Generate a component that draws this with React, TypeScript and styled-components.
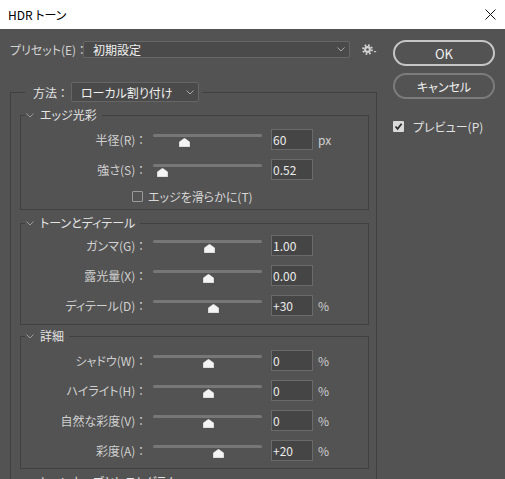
import styled, { createGlobalStyle } from "styled-components";

const GlobalStyle = createGlobalStyle`
  html, body {
    margin: 0;
    padding: 0;
    background: #535353;
    overflow: hidden;
  }
  body {
    font-family: "Noto Sans CJK JP", "Noto Sans", sans-serif;
    font-size: 12px;
    font-feature-settings: "palt";
  }
`;

type SliderRow = { label: string; value: string; unit?: string; pos: number };

const edgeRows: SliderRow[] = [
  { label: "半径(R) ：", value: "60", unit: "px", pos: 31 },
  { label: "強さ(S) ：", value: "0.52", pos: 9.5 },
];

const toneRows: SliderRow[] = [
  { label: "ガンマ(G) ：", value: "1.00", pos: 56 },
  { label: "露光量(X) ：", value: "0.00", pos: 55 },
  { label: "ディテール(D) ：", value: "+30", unit: "%", pos: 60 },
];

const detailRows: SliderRow[] = [
  { label: "シャドウ(W) ：", value: "0", unit: "%", pos: 55 },
  { label: "ハイライト(H) ：", value: "0", unit: "%", pos: 55 },
  { label: "自然な彩度(V) ：", value: "0", unit: "%", pos: 55 },
  { label: "彩度(A) ：", value: "+20", unit: "%", pos: 65 },
];

const Chevron = ({ color = "#a8a8a8" }: { color?: string }) => (
  <svg width="8" height="5" viewBox="0 0 8 5">
    <polyline points="0.5,0.5 4,4 7.5,0.5" fill="none" stroke={color} strokeWidth="1" />
  </svg>
);

const Gear = () => (
  <svg width="15" height="11" viewBox="0 0 15 11">
    <circle cx="5.5" cy="5.5" r="4.3" fill="none" stroke="#d0d0d0" strokeWidth="2.2" strokeDasharray="1.7 1.68" />
    <circle cx="5.5" cy="5.5" r="3.4" fill="#d0d0d0" />
    <circle cx="5.5" cy="5.5" r="1.3" fill="#535353" />
    <polygon points="11.5,7 14.5,7 13,8.8" fill="#d0d0d0" />
  </svg>
);

const Thumb = () => (
  <svg width="11" height="9" viewBox="0 0 11 9">
    <polygon points="5.5,0.3 10.7,4 10.7,8.7 0.3,8.7 0.3,4" fill="#f4f4f4" stroke="#f4f4f4" strokeWidth="0.6" strokeLinejoin="round" />
  </svg>
);

const Slider = ({ row }: { row: SliderRow }) => (
  <Row>
    <RowLabel>{row.label}</RowLabel>
    <SliderBox>
      <Track />
      <ThumbWrap style={{ left: row.pos - 5.5 }}>
        <Thumb />
      </ThumbWrap>
    </SliderBox>
    <NumInput readOnly value={row.value} />
    {row.unit && <Unit>{row.unit}</Unit>}
  </Row>
);

const App: React.FC = () => {
  return (
    <>
      <GlobalStyle />
      <Window>
        <TitleBar>
          <span>HDR トーン</span>
          <svg width="11" height="11" viewBox="0 0 11 11">
            <line x1="0.5" y1="0.5" x2="10.5" y2="10.5" stroke="#111" strokeWidth="1" />
            <line x1="10.5" y1="0.5" x2="0.5" y2="10.5" stroke="#111" strokeWidth="1" />
          </svg>
        </TitleBar>
        <Body>
          <LeftCol>
            <PresetRow>
              <PresetLabel>プリセット(E) ：</PresetLabel>
              <Select $w={267} $h={17}>
                <span>初期設定</span>
                <Chevron />
              </Select>
              <GearWrap>
                <Gear />
              </GearWrap>
            </PresetRow>
            <OuterSet>
              <OuterLegend>
                <MethodLabel>方法 ：</MethodLabel>
                <Select $w={128} $h={20}>
                  <span>ローカル割り付け</span>
                  <Chevron />
                </Select>
              </OuterLegend>
              <Group $mt={6} $pt={2} $pb={1}>
                <GroupLegend>
                  <Chevron color="#9a9a9a" />
                  <span>エッジ光彩</span>
                </GroupLegend>
                {edgeRows.map((r) => (
                  <Slider key={r.label} row={r} />
                ))}
                <CheckRow>
                  <EmptyBox />
                  <span>エッジを滑らかに(T)</span>
                </CheckRow>
              </Group>
              <Group $mt={6} $pt={0} $pb={4}>
                <GroupLegend>
                  <Chevron color="#9a9a9a" />
                  <span>トーンとディテール</span>
                </GroupLegend>
                {toneRows.map((r) => (
                  <Slider key={r.label} row={r} />
                ))}
              </Group>
              <Group $mt={4} $pt={2} $pb={3}>
                <GroupLegend>
                  <Chevron color="#9a9a9a" />
                  <span>詳細</span>
                </GroupLegend>
                {detailRows.map((r) => (
                  <Slider key={r.label} row={r} />
                ))}
              </Group>
              <Group $mt={6} $pt={0} $pb={40}>
                <GroupLegend>
                  <Chevron color="#9a9a9a" />
                  <span>トーンカーブとヒストグラム</span>
                </GroupLegend>
              </Group>
            </OuterSet>
          </LeftCol>
          <RightCol>
            <PillButton $primary>OK</PillButton>
            <PillButton>キャンセル</PillButton>
            <PreviewRow>
              <CheckedBox>
                <svg width="9" height="9" viewBox="0 0 9 9">
                  <polyline points="1.5,4.5 3.6,6.8 7.6,1.8" fill="none" stroke="#2e2e2e" strokeWidth="1.8" />
                </svg>
              </CheckedBox>
              <span>プレビュー(P)</span>
            </PreviewRow>
          </RightCol>
        </Body>
      </Window>
    </>
  );
};

export default App;

const Window = styled.div`
  width: 505px;
  height: 479px;
  overflow: hidden;
  display: flex;
  flex-direction: column;
`;

const TitleBar = styled.div`
  height: 29px;
  flex-shrink: 0;
  background: #fff;
  color: #000;
  display: flex;
  align-items: center;
  justify-content: space-between;
  padding: 0 9px 0 8px;
  font-size: 12px;
`;

const Body = styled.div`
  flex: 1;
  display: flex;
  padding: 11px 0 0 10px;
  background: #535353;
  color: #d4d4d4;
`;

const LeftCol = styled.div`
  width: 367px;
  flex-shrink: 0;
  display: flex;
  flex-direction: column;
`;

const RightCol = styled.div`
  width: 102px;
  margin-left: 16px;
  display: flex;
  flex-direction: column;
`;

//PresetRow
const PresetRow = styled.div`
  margin-top: 1px;
  height: 17px;
  display: flex;
  align-items: center;
`;

const PresetLabel = styled.span`
  width: 73px;
  flex-shrink: 0;
  white-space: nowrap;
  color: #d2d2d2;
`;

const Select = styled.div<{ $w: number; $h: number }>`
  width: ${(p) => p.$w}px;
  height: ${(p) => p.$h}px;
  box-sizing: border-box;
  flex-shrink: 0;
  border: 1px solid #666;
  border-radius: 2px;
  background: #4a4a4a;
  color: #f0f0f0;
  display: flex;
  align-items: center;
  justify-content: space-between;
  padding: 0 4px 0 9px;
  white-space: nowrap;
`;

const GearWrap = styled.div`
  margin-left: 12px;
  display: flex;
  align-items: center;
`;

//Groups
const OuterSet = styled.fieldset`
  margin: 24px 0 0;
  width: 367px;
  box-sizing: border-box;
  min-width: 0;
  border: 1px solid #404040;
  padding: 0 7px 0 9px;
`;

const OuterLegend = styled.legend`
  margin-left: 5px;
  padding: 0 3px 0 8px;
  height: 20px;
  display: flex;
  align-items: center;
  color: #e2e2e2;
`;

const MethodLabel = styled.span`
  width: 38px;
  white-space: nowrap;
`;

const Group = styled.fieldset<{ $mt: number; $pt: number; $pb: number }>`
  margin: ${(p) => p.$mt}px 0 0;
  min-width: 0;
  box-sizing: border-box;
  border: 1px solid #404040;
  padding: ${(p) => p.$pt}px 0 ${(p) => p.$pb}px;
`;

const GroupLegend = styled.legend`
  margin-left: 4px;
  padding: 0 5px 0 1px;
  height: 14px;
  line-height: 14px;
  display: flex;
  align-items: center;
  gap: 6px;
  color: #e4e4e4;
`;

//Rows
const Row = styled.div`
  height: 30px;
  display: flex;
  align-items: center;
`;

const RowLabel = styled.span`
  width: 123px;
  flex-shrink: 0;
  text-align: right;
  white-space: nowrap;
  color: #d0d0d0;
`;

const SliderBox = styled.div`
  position: relative;
  width: 109px;
  height: 20px;
  margin-left: 9px;
  flex-shrink: 0;
`;

const Track = styled.div`
  margin-top: 5px;
  height: 3px;
  border-radius: 2px;
  background: #777;
`;

const ThumbWrap = styled.div`
  position: absolute;
  top: 9px;
  line-height: 0;
`;

const NumInput = styled.input`
  margin-left: 9px;
  width: 42px;
  height: 21px;
  box-sizing: border-box;
  flex-shrink: 0;
  border: 1px solid #6a6a6a;
  background: #454545;
  color: #ececec;
  font: inherit;
  padding: 0 0 0 1px;
  outline: none;
`;

const Unit = styled.span`
  margin-left: 5px;
  color: #cfcfcf;
`;

const CheckRow = styled.div`
  height: 24px;
  padding-left: 111px;
  display: flex;
  align-items: center;
  gap: 5px;
  color: #d6d6d6;
`;

const EmptyBox = styled.div`
  width: 11px;
  height: 11px;
  box-sizing: border-box;
  border: 1px solid #9a9a9a;
  border-radius: 1px;
  background: #545454;
`;

//RightCol
const PillButton = styled.button<{ $primary?: boolean }>`
  width: 102px;
  height: 26px;
  box-sizing: border-box;
  border-radius: 13px;
  border: 2px solid ${(p) => (p.$primary ? "#c6c6c6" : "#7c7c7c")};
  background: transparent;
  color: #f0f0f0;
  font: inherit;
  font-size: ${(p) => (p.$primary ? "13px" : "12px")};
  padding: 0;
  & + & {
    margin-top: 7px;
  }
`;

const PreviewRow = styled.div`
  margin-top: 19px;
  display: flex;
  align-items: center;
  gap: 9px;
  color: #e0e0e0;
`;

const CheckedBox = styled.div`
  width: 11px;
  height: 11px;
  border-radius: 1px;
  background: #dadada;
  display: flex;
  align-items: center;
  justify-content: center;
`;
